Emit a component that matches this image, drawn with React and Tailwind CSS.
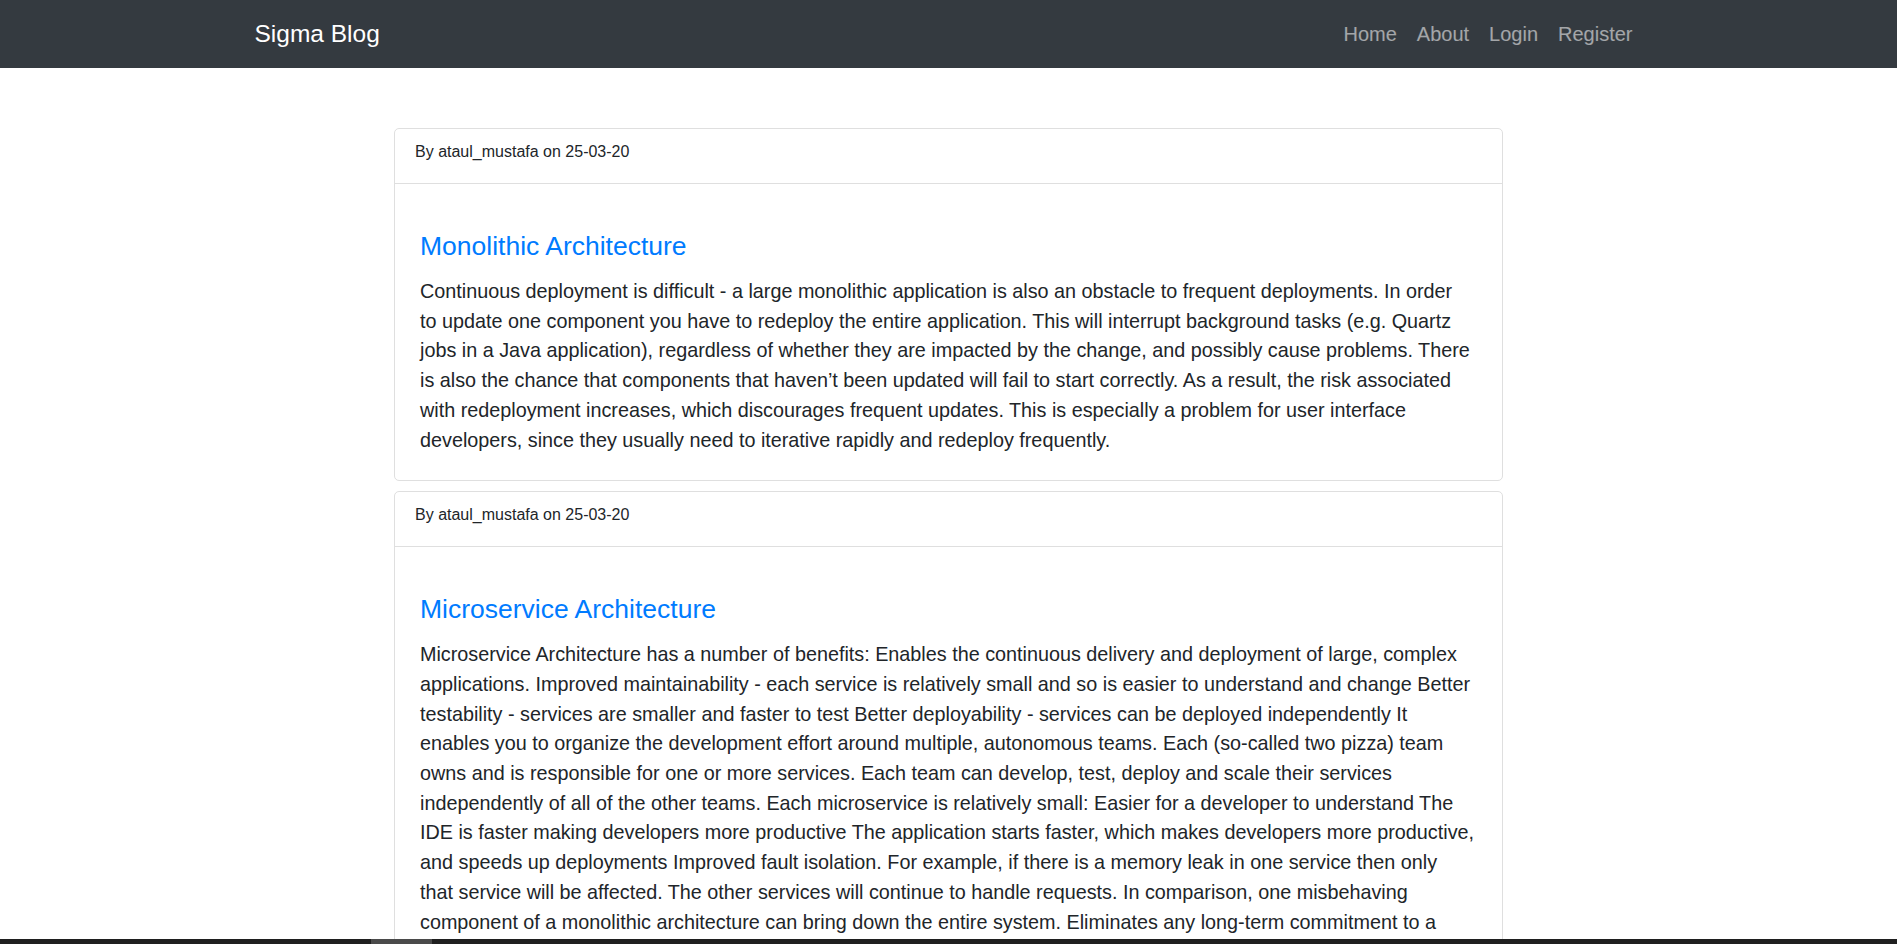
const POSTS = [
  {
    id: 1,
    author: "ataul_mustafa",
    date: "25-03-20",
    title: "Monolithic Architecture",
    lines: [
      "Continuous deployment is difficult - a large monolithic application is also an obstacle to frequent deployments. In order",
      "to update one component you have to redeploy the entire application. This will interrupt background tasks (e.g. Quartz",
      "jobs in a Java application), regardless of whether they are impacted by the change, and possibly cause problems. There",
      "is also the chance that components that haven\u2019t been updated will fail to start correctly. As a result, the risk associated",
      "with redeployment increases, which discourages frequent updates. This is especially a problem for user interface",
      "developers, since they usually need to iterative rapidly and redeploy frequently.",
    ],
  },
  {
    id: 2,
    author: "ataul_mustafa",
    date: "25-03-20",
    title: "Microservice Architecture",
    lines: [
      "Microservice Architecture has a number of benefits: Enables the continuous delivery and deployment of large, complex",
      "applications. Improved maintainability - each service is relatively small and so is easier to understand and change Better",
      "testability - services are smaller and faster to test Better deployability - services can be deployed independently It",
      "enables you to organize the development effort around multiple, autonomous teams. Each (so-called two pizza) team",
      "owns and is responsible for one or more services. Each team can develop, test, deploy and scale their services",
      "independently of all of the other teams. Each microservice is relatively small: Easier for a developer to understand The",
      "IDE is faster making developers more productive The application starts faster, which makes developers more productive,",
      "and speeds up deployments Improved fault isolation. For example, if there is a memory leak in one service then only",
      "that service will be affected. The other services will continue to handle requests. In comparison, one misbehaving",
      "component of a monolithic architecture can bring down the entire system. Eliminates any long-term commitment to a",
      "technology stack. When developing a new service you can pick a new technology stack. Similarly, when making major",
      "changes to an existing service you can rewrite it using a new technology stack.",
    ],
  },
];

const NAV_LINKS = ["Home", "About", "Login", "Register"];

function Navbar() {
  return (
    <nav className="h-[68px] bg-[#343a40]">
      <div className="mx-auto flex h-full w-[1388px] items-center justify-between">
        <a href="#" className="text-[24.5px] leading-[30px] text-white">
          Sigma Blog
        </a>
        <ul className="flex items-center">
          {NAV_LINKS.map((link) => (
            <li key={link}>
              <a href="#" className="block px-[10px] text-[20px] leading-[30px] text-white/55">
                {link}
              </a>
            </li>
          ))}
        </ul>
      </div>
    </nav>
  );
}

function PostCard({ post }) {
  return (
    <div className="rounded-[5px] border border-[#dfdfdf] bg-white">
      <div className="h-[55px] border-b border-[#dfdfdf] px-[20px] pt-[11px] text-[16px] leading-[24px]">
        By {post.author} on {post.date}
      </div>
      <div className="px-[25px] pt-[47px] pb-[25px]">
        <h5 className="mb-[16px] text-[26.5px] leading-[30px] text-[#007bff]">{post.title}</h5>
        <p className="text-[19.8px] leading-[29.7px] text-[#212529]">
          {post.lines.map((line, i) => (
            <span key={i} className="block whitespace-nowrap">
              {line}
            </span>
          ))}
        </p>
      </div>
    </div>
  );
}

export default function App() {
  return (
    <div className="relative h-screen overflow-hidden bg-white font-['Segoe_UI','Liberation_Sans',sans-serif] text-[#212529]">
      <Navbar />
      <main className="mx-auto mt-[60px] flex w-[1109px] flex-col gap-[10px]">
        {POSTS.map((post) => (
          <PostCard key={post.id} post={post} />
        ))}
      </main>
      <div className="fixed inset-x-0 bottom-0 h-[5px] bg-[#1f1f1f]">
        <div className="ml-[371px] h-full w-[61px] bg-[#4a4a4a]" />
      </div>
    </div>
  );
}
